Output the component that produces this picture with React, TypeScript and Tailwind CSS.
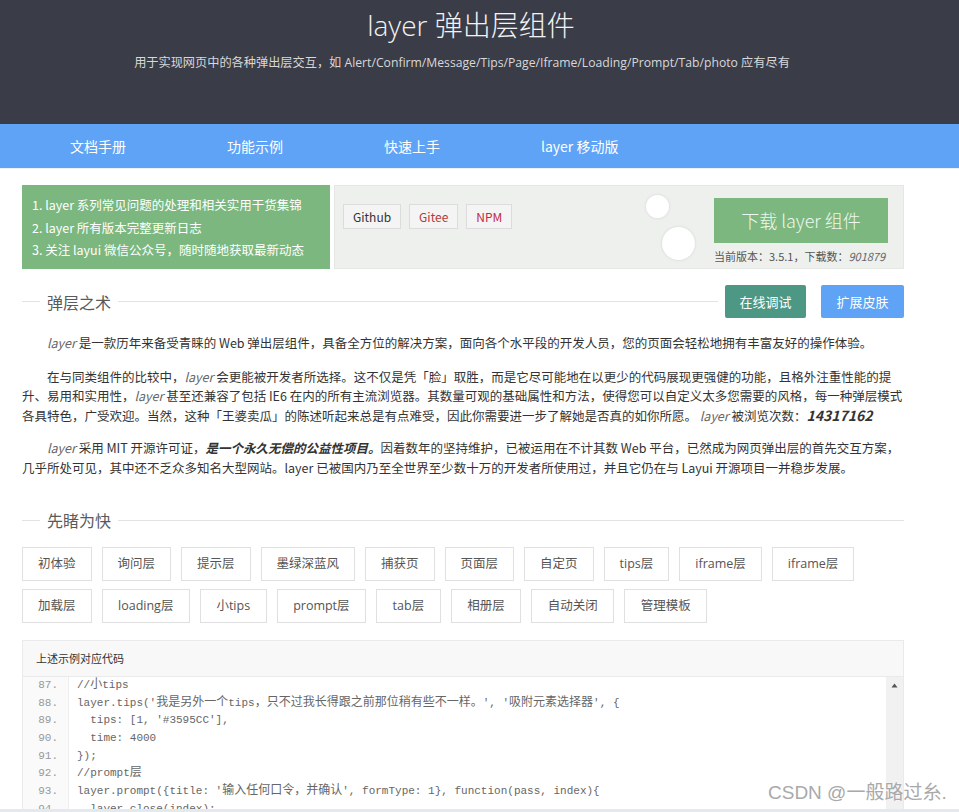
import React from "react";

const row1 = ["初体验", "询问层", "提示层", "墨绿深蓝风", "捕获页", "页面层", "自定页", "tips层", "iframe层", "iframe层"];
const row2 = ["加载层", "loading层", "小tips", "prompt层", "tab层", "相册层", "自动关闭", "管理模板"];

const codeLines: [string, string][] = [
  ["87.", "//小tips"],
  ["88.", "layer.tips('我是另外一个tips，只不过我长得跟之前那位稍有些不一样。', '吸附元素选择器', {"],
  ["89.", "  tips: [1, '#3595CC'],"],
  ["90.", "  time: 4000"],
  ["91.", "});"],
  ["92.", "//prompt层"],
  ["93.", "layer.prompt({title: '输入任何口令，并确认', formType: 1}, function(pass, index){"],
  ["94.", "  layer.close(index);"],
];

function CodeText({ text }: { text: string }) {
  const parts = text.split(/([\u3000-\u9fff\uff00-\uffef]+)/);
  return (
    <>
      {parts.map((p, i) =>
        /[\u3000-\u9fff\uff00-\uffef]/.test(p) ? (
          <span key={i} className="text-[12px] leading-[1] font-['Noto_Sans_CJK_SC',sans-serif]">{p}</span>
        ) : (
          <span key={i}>{p}</span>
        )
      )}
    </>
  );
}

function Heading({ title }: { title: string }) {
  return (
    <div className="flex items-center flex-1">
      <div className="w-[18px] h-px bg-[#e2e2e2]" />
      <div className="mx-[7px] text-[16px] text-[#5a5a5a] leading-[24px]">{title}</div>
      <div className="flex-1 h-px bg-[#e2e2e2]" />
    </div>
  );
}

const btn = "h-[34px] px-[15px] flex items-center border border-[#e0e0e0] text-[12.5px] text-[#555] font-['Open_Sans','Noto_Sans_CJK_SC',sans-serif]";
const btn2 = "h-[34px] px-[15.5px] flex items-center border border-[#e0e0e0] text-[12.5px] text-[#555] font-['Open_Sans','Noto_Sans_CJK_SC',sans-serif]";

export default function App() {
  return (
    <div className="relative w-full h-[812px] overflow-hidden bg-white font-['Noto_Sans_CJK_SC',sans-serif]">
      {/* header */}
      <div className="h-[124px] bg-[#3a3c48] flex flex-col items-center pr-[17px] font-['Open_Sans','Noto_Sans_CJK_SC',sans-serif]">
        <div className="pt-[7px] h-[43px] text-[28px] leading-[36px] font-light text-[#f2f2f2]">layer 弹出层组件</div>
        <div className="mt-[10px] mr-[18px] text-[12.2px] leading-[20px] text-[#d8d8d8]">
          用于实现网页中的各种弹出层交互，如 Alert/Confirm/Message/Tips/Page/Iframe/Loading/Prompt/Tab/photo 应有尽有
        </div>
      </div>
      {/* nav */}
      <div className="h-[45px] bg-[#5ea3f5] flex items-center pl-[70px] gap-[101px] text-white text-[14px] border-b border-[#eef2f6]">
        <span>文档手册</span>
        <span>功能示例</span>
        <span>快速上手</span>
        <span>layer 移动版</span>
      </div>

      <div className="ml-[22px] w-[882px]">
        {/* banner */}
        <div className="mt-[16px] flex gap-[4px] h-[84px]">
          <div className="w-[308px] bg-[#7bb77e] text-white text-[12.5px] leading-[22.5px] pt-[9px] pl-[10px]">
            <div>1. layer 系列常见问题的处理和相关实用干货集锦</div>
            <div>2. layer 所有版本完整更新日志</div>
            <div>3. 关注 layui 微信公众号，随时随地获取最新动态</div>
          </div>
          <div className="relative flex-1 bg-[#eef0ee] border border-[#e4e7e4] flex justify-between pl-[8px] pr-[15px]">
            <div className="flex gap-[8px] pt-[18px] text-[12px]">
              <div className="h-[25px] px-[9px] flex items-center border border-[#dcdcdc] bg-[#f3f4f3] text-[#333]">Github</div>
              <div className="h-[25px] px-[9px] flex items-center border border-[#dcdcdc] bg-[#f3f4f3] text-[#b33a3a]">Gitee</div>
              <div className="h-[25px] px-[9px] flex items-center border border-[#dcdcdc] bg-[#f3f4f3] text-[#c3284a]">NPM</div>
            </div>
            <div className="pt-[12px] flex flex-col">
              <div className="w-[174px] h-[45px] bg-[#7bb77e] flex items-center justify-center text-[18px] font-light text-[#eef8ee]">下载 layer 组件</div>
              <div className="mt-[6px] text-[11px] text-[#555] leading-[14px]">
                当前版本：3.5.1，下载数：<i className="text-[#666]">901879</i>
              </div>
            </div>
            <div className="absolute left-[311px] top-[9px] w-[23px] h-[23px] rounded-full bg-white shadow-[0_0_3px_rgba(0,0,0,0.12)]" />
            <div className="absolute left-[327px] top-[41px] w-[33px] h-[33px] rounded-full bg-white shadow-[0_0_3px_rgba(0,0,0,0.12)]" />
          </div>
        </div>

        {/* section 1 */}
        <div className="mt-[16px] flex items-center">
          <Heading title="弹层之术" />
          <div className="ml-[7px] w-[81px] h-[33px] bg-[#4d9884] rounded-[2px] text-white text-[13px] flex items-center justify-center">在线调试</div>
          <div className="ml-[15px] w-[83px] h-[33px] bg-[#5ea3f5] rounded-[2px] text-white text-[13px] flex items-center justify-center">扩展皮肤</div>
        </div>

        <div className="mt-[15px] text-[12.5px] leading-[19.5px] text-[#333]">
          <p className="indent-[25px] mb-[14px]">
            <i className="text-[#666]">layer</i> 是一款历年来备受青睐的 Web 弹出层组件，具备全方位的解决方案，面向各个水平段的开发人员，您的页面会轻松地拥有丰富友好的操作体验。
          </p>
          <p className="indent-[25px] mb-[13px]">
            在与同类组件的比较中，<i className="text-[#666]">layer</i> 会更能被开发者所选择。这不仅是凭「脸」取胜，而是它尽可能地在以更少的代码展现更强健的功能，且格外注重性能的提升、易用和实用性，<i className="text-[#666]">layer</i> 甚至还兼容了包括 IE6 在内的所有主流浏览器。其数量可观的基础属性和方法，使得您可以自定义太多您需要的风格，每一种弹层模式各具特色，广受欢迎。当然，这种「王婆卖瓜」的陈述听起来总是有点难受，因此你需要进一步了解她是否真的如你所愿。 <i className="text-[#666]">layer</i> 被浏览次数：<b><i className="text-[14px]">14317162</i></b>
          </p>
          <p className="indent-[25px]">
            <i className="text-[#666]">layer</i> 采用 MIT 开源许可证，<b><i>是一个永久无偿的公益性项目。</i></b>因着数年的坚持维护，已被运用在不计其数 Web 平台，已然成为网页弹出层的首先交互方案，几乎所处可见，其中还不乏众多知名大型网站。layer 已被国内乃至全世界至少数十万的开发者所使用过，并且它仍在与 Layui 开源项目一并稳步发展。
          </p>
        </div>

        {/* section 2 */}
        <div className="mt-[31px] flex items-center">
          <Heading title="先睹为快" />
        </div>

        <div className="mt-[15px] flex flex-col gap-[8px]">
          <div className="flex gap-[10px]">
            {row1.map((t, i) => (
              <div key={i} className={btn}>{t}</div>
            ))}
          </div>
          <div className="flex gap-[10px]">
            {row2.map((t, i) => (
              <div key={i} className={i === 0 ? btn : btn2}>{t}</div>
            ))}
          </div>
        </div>

        {/* code block */}
        <div className="mt-[17px] border border-[#eaeaea]">
          <div className="h-[36px] bg-[#f8f8f8] border-b border-[#eaeaea] pl-[13px] flex items-center text-[11px] text-[#333]">上述示例对应代码</div>
          <div className="relative flex">
            <div className="w-[46px] bg-[#fafafa] border-r border-[#eee]">
              {codeLines.map(([n]) => (
                <div key={n} className="h-[17.7px] leading-[17.7px] text-right pr-[10px] text-[11px] text-[#999] font-['Liberation_Mono',monospace]">{n}</div>
              ))}
            </div>
            <div className="flex-1 pl-[8px] font-['Liberation_Mono','Noto_Sans_CJK_SC',monospace] text-[11px] text-[#666]">
              {codeLines.map(([n, c]) => (
                <div key={n} className="h-[17.7px] leading-[17.7px] whitespace-pre"><CodeText text={c} /></div>
              ))}
            </div>
            <div className="w-[17px] bg-[#f1f1f1] flex justify-center pt-[6px]">
              <svg width="7" height="5" viewBox="0 0 7 5"><path d="M3.5 0.5 L6.5 4.5 L0.5 4.5 Z" fill="#555" /></svg>
            </div>
          </div>
        </div>
      </div>

      {/* watermark */}
      <div className="absolute left-[768px] top-[780px] text-[19px] leading-[26px] text-[#a9a9a9] font-['Liberation_Sans','Noto_Sans_CJK_SC',sans-serif] [text-shadow:0_0_2px_#fff]">
        CSDN @一般路过糸.
      </div>
      <div className="absolute left-0 bottom-0 w-full h-[3px] bg-[#e3e9ee]" />
    </div>
  );
}
